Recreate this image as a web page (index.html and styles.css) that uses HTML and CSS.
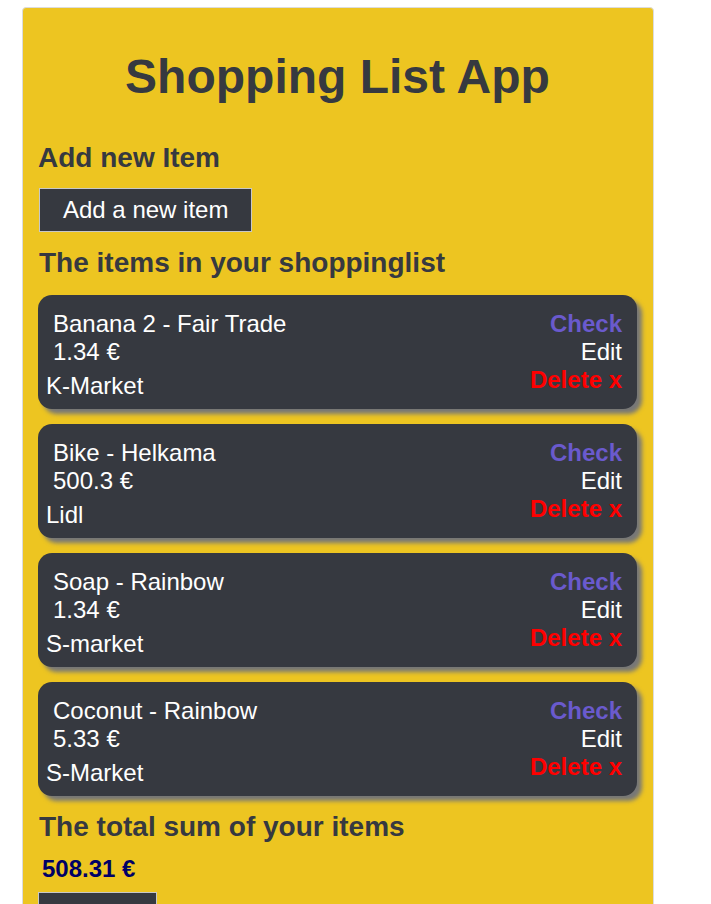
FILE: index.html
```html
<!DOCTYPE html>
<html lang="en">
<head>
<meta charset="utf-8">
<title>Shopping List App</title>
<link rel="stylesheet" href="styles.css">
</head>
<body>
<div class="app">
  <h1 class="title">Shopping List App</h1>
  <h2 class="heading heading-add">Add new Item</h2>
  <button class="btn">Add a new item</button>
  <h2 class="heading heading-list">The items in your shoppinglist</h2>
  <ul class="items">
    <li class="card">
      <div class="card-left">
        <div class="card-main">
          <div class="line">Banana 2 - Fair Trade</div>
          <div class="line">1.34 €</div>
        </div>
        <div class="line store">K-Market</div>
      </div>
      <div class="card-actions">
        <div class="line check">Check</div>
        <div class="line edit">Edit</div>
        <div class="line delete">Delete x</div>
      </div>
    </li>
    <li class="card">
      <div class="card-left">
        <div class="card-main">
          <div class="line">Bike - Helkama</div>
          <div class="line">500.3 €</div>
        </div>
        <div class="line store">Lidl</div>
      </div>
      <div class="card-actions">
        <div class="line check">Check</div>
        <div class="line edit">Edit</div>
        <div class="line delete">Delete x</div>
      </div>
    </li>
    <li class="card">
      <div class="card-left">
        <div class="card-main">
          <div class="line">Soap - Rainbow</div>
          <div class="line">1.34 €</div>
        </div>
        <div class="line store">S-market</div>
      </div>
      <div class="card-actions">
        <div class="line check">Check</div>
        <div class="line edit">Edit</div>
        <div class="line delete">Delete x</div>
      </div>
    </li>
    <li class="card">
      <div class="card-left">
        <div class="card-main">
          <div class="line">Coconut - Rainbow</div>
          <div class="line">5.33 €</div>
        </div>
        <div class="line store">S-Market</div>
      </div>
      <div class="card-actions">
        <div class="line check">Check</div>
        <div class="line edit">Edit</div>
        <div class="line delete">Delete x</div>
      </div>
    </li>
  </ul>
  <h2 class="heading heading-total">The total sum of your items</h2>
  <div class="total">508.31 €</div>
  <button class="btn btn-clear" aria-label="Empty the list"></button>
</div>
</body>
</html>
```
FILE: styles.css
```css
html, body {
  margin: 0;
  padding: 0;
  background: #ffffff;
  font-family: "Liberation Sans", Arial, sans-serif;
}

.app {
  width: 632px;
  box-sizing: border-box;
  margin: 7px 0 0 22px;
  padding: 0 16px 40px 15px;
  background: #edc521;
  border: 1px solid #dcdcdc;
  border-radius: 4px;
  color: #363940;
}

.title {
  margin: 0;
  padding-top: 41px;
  font-size: 48px;
  font-weight: bold;
  line-height: 55px;
  text-align: center;
}

.heading {
  margin: 0;
  font-size: 28px;
  font-weight: bold;
  line-height: 32px;
}

.heading-add {
  margin-top: 38px;
}

.heading-list {
  margin-top: 15px;
  padding-left: 1px;
}

.heading-total {
  margin-top: 15px;
  padding-left: 1px;
}

.btn {
  display: block;
  margin: 14px 0 0 1px;
  padding: 7px 23px;
  background: #363940;
  color: #ffffff;
  border: 1px solid #c8c8c8;
  border-radius: 0;
  font-family: "Liberation Sans", Arial, sans-serif;
  font-size: 24px;
  line-height: 28px;
}

.btn-clear {
  margin: 9px 0 0 0;
  width: 119px;
  height: 44px;
  padding: 0;
}

.items {
  list-style: none;
  margin: 16px 0 0 0;
  padding: 0;
  display: flex;
  flex-direction: column;
  gap: 15px;
}

.card {
  display: flex;
  justify-content: space-between;
  padding: 15px 15px 9px 8px;
  background: #363940;
  color: #ffffff;
  border-radius: 14px;
  box-shadow: 5px 5px 4px #777777;
  font-size: 24px;
}

.line {
  line-height: 28px;
  white-space: nowrap;
}

.card-main {
  padding-left: 7px;
}

.store {
  margin-top: 6px;
}

.card-actions {
  text-align: right;
}

.check {
  color: #6a5acd;
  font-weight: bold;
}

.edit {
  color: #ffffff;
}

.delete {
  color: #ff0000;
  font-weight: bold;
}

.total {
  margin-top: 12px;
  padding-left: 4px;
  font-size: 24px;
  font-weight: bold;
  line-height: 28px;
  color: #000066;
}
```
